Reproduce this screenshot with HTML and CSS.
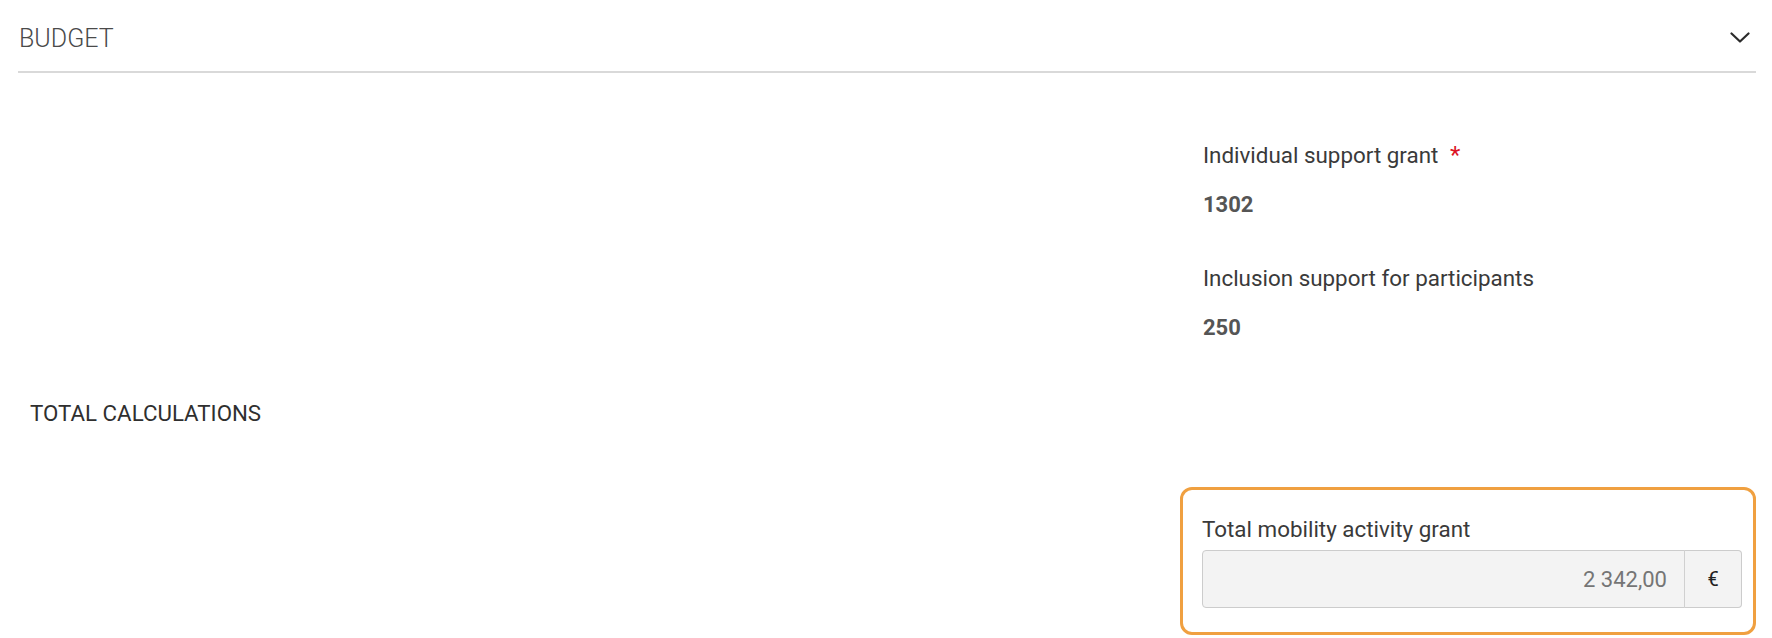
FILE: index.html
```html
<!DOCTYPE html>
<html lang="en">
<head>
<meta charset="utf-8">
<title>Budget</title>
<link rel="stylesheet" href="styles.css">
</head>
<body>
<div class="page">
  <div class="section-header">
    <span class="section-title">BUDGET</span>
    <svg class="chevron" width="20" height="12" viewBox="0 0 20 12" aria-hidden="true">
      <path d="M1.5 1.5 L10 9.5 L18.5 1.5" fill="none" stroke="#2b2b2b" stroke-width="2.2" stroke-linecap="round" stroke-linejoin="round"/>
    </svg>
  </div>

  <div class="fields-row">
    <div class="fields">
      <div class="field-label">Individual support grant <span class="required">*</span></div>
      <div class="field-value">1302</div>
      <div class="field-label second">Inclusion support for participants</div>
      <div class="field-value">250</div>
    </div>
  </div>

  <div class="subheading">TOTAL CALCULATIONS</div>

  <div class="total-row">
    <div class="total-box">
      <div class="field-label">Total mobility activity grant</div>
      <div class="input-group">
        <div class="input-readonly">2 342,00</div>
        <div class="input-addon">€</div>
      </div>
    </div>
  </div>
</div>
</body>
</html>
```

FILE: styles.css
```css
* { box-sizing: border-box; }

html, body {
  margin: 0;
  padding: 0;
  background: #ffffff;
}

body {
  font-family: Roboto, "Liberation Sans", Arial, sans-serif;
  color: #333333;
}

.page {
  padding: 0 16px 0 18px;
}

.section-header {
  display: flex;
  align-items: center;
  justify-content: space-between;
  padding: 24px 6px 17px 1px;
  border-bottom: 2px solid #d9d9d9;
}

.section-title {
  font-size: 25px;
  font-weight: 300;
  line-height: 30px;
  color: #4a4a4a;
}

.chevron {
  display: block;
  margin-top: -2px;
}

.fields-row {
  display: flex;
  justify-content: flex-end;
  padding-top: 69px;
}

.fields {
  width: 553px;
}

.field-label {
  font-size: 22.4px;
  line-height: 26px;
  color: #3a3a3a;
}

.field-label.second {
  margin-top: 47px;
}

.required {
  color: #dc1426;
  margin-left: 6px;
  font-size: 24px;
}

.field-value {
  margin-top: 24px;
  font-size: 22px;
  line-height: 26px;
  font-weight: 700;
  color: #555555;
}

.subheading {
  margin-top: 59px;
  padding-left: 12px;
  font-size: 22.3px;
  line-height: 26px;
  color: #2f2f2f;
}

.total-row {
  display: flex;
  justify-content: flex-end;
  margin-top: 61px;
}

.total-box {
  width: 576px;
  border: 3px solid #f0a040;
  border-radius: 12px;
  padding: 26px 11px 24px 19px;
}

.input-group {
  display: flex;
  margin-top: 8px;
  height: 58px;
}

.input-readonly {
  flex: 1;
  display: flex;
  align-items: center;
  justify-content: flex-end;
  padding: 0 17px;
  background: #f3f3f3;
  border: 1px solid #cccccc;
  border-radius: 4px 0 0 4px;
  font-size: 22px;
  color: #757575;
}

.input-addon {
  width: 58px;
  display: flex;
  align-items: center;
  justify-content: center;
  background: #f3f3f3;
  border: 1px solid #cccccc;
  border-left: 1px solid #d0d0d0;
  margin-left: -1px;
  border-radius: 0 4px 4px 0;
  font-size: 20px;
  color: #222222;
}
```
